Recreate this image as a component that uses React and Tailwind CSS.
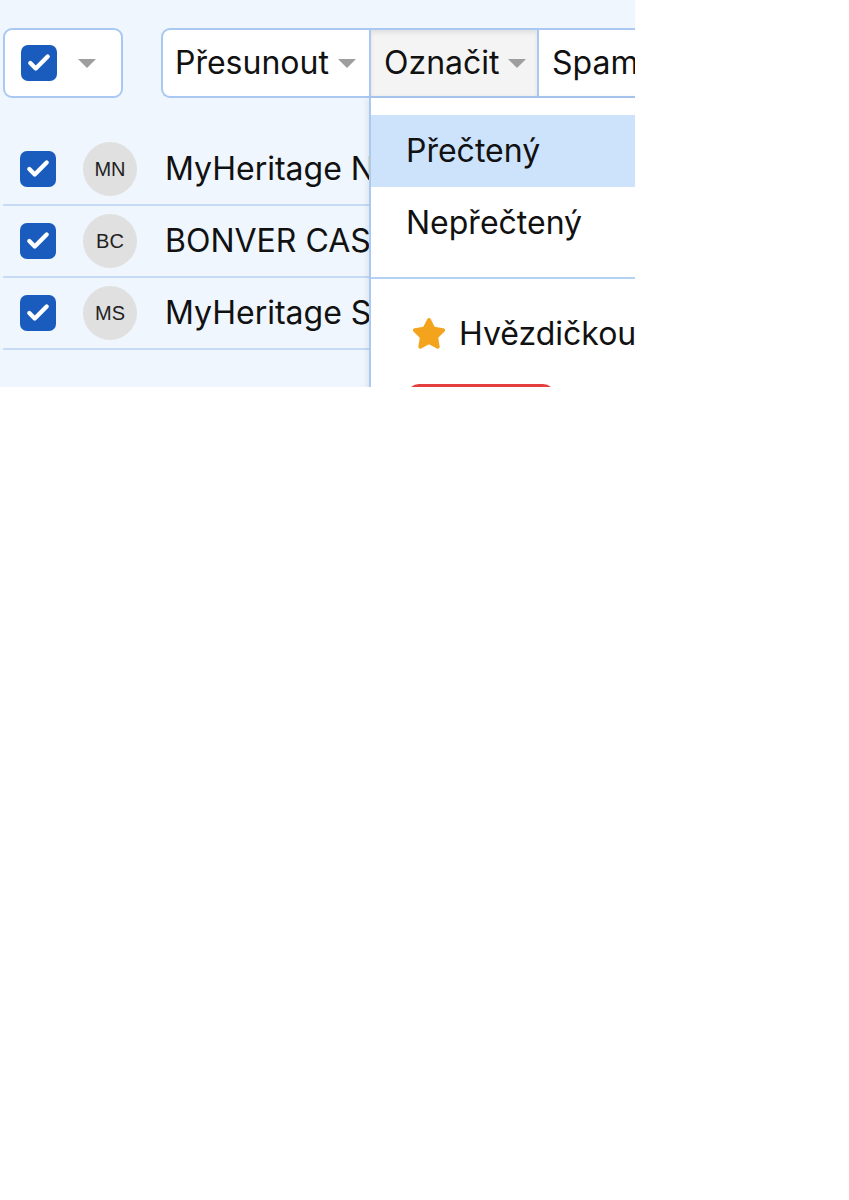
import { Check, Star } from 'lucide-react'

const rows = [
  { initials: 'MN', name: 'MyHeritage Newsletter' },
  { initials: 'BC', name: 'BONVER CASINO' },
  { initials: 'MS', name: 'MyHeritage Support' },
]

const font = { fontFamily: 'Inter, "Noto Sans", sans-serif' }

function Box() {
  return (
    <span className="w-[36px] h-[36px] rounded-[7px] bg-[#1a5cbd] flex items-center justify-center shrink-0">
      <Check size={26} strokeWidth={4} className="text-white" />
    </span>
  )
}

function Caret() {
  return <span className="w-0 h-0 shrink-0 border-l-[9px] border-r-[9px] border-t-[9px] border-l-transparent border-r-transparent border-t-[#9e9e9e]" />
}

export default function App() {
  return (
    <div className="w-[635px] h-[387px] overflow-hidden relative bg-[#eff6fe] text-[#111]" style={font}>
      <div className="flex items-center pt-[28px] pl-[3px]">
        <div className="w-[120px] h-[70px] shrink-0 rounded-[9px] border-2 border-[#a9c8f2] bg-white flex items-center pl-[16px] gap-[21px]">
          <Box />
          <Caret />
        </div>
        <div className="ml-[38px] shrink-0 flex h-[70px] border-2 border-r-0 border-[#a9c8f2] rounded-l-[9px] bg-white text-[32px]">
          <div className="w-[206px] shrink-0 flex items-center pl-[12px] gap-[9px]">
            Přesunout <Caret />
          </div>
          <div className="w-[170px] shrink-0 flex items-center pl-[13px] gap-[8px] border-l-2 border-r-2 border-[#a9c8f2] bg-[#f4f4f4] shadow-[inset_0_3px_4px_rgba(0,0,0,0.08)]">
            Označit <Caret />
          </div>
          <div className="w-[200px] shrink-0 flex items-center pl-[13px] whitespace-nowrap">Spam</div>
        </div>
      </div>

      <div className="mt-[36px] ml-[3px]">
        {rows.map((r) => (
          <div key={r.initials} className="h-[72px] flex items-center border-b-2 border-[#c6dbf5] pl-[17px]">
            <Box />
            <span
              className="ml-[27px] w-[54px] h-[54px] shrink-0 rounded-full bg-[#e0e0e0] flex items-center justify-center text-[20px] text-[#222]"
              style={{ fontFamily: '"Liberation Sans", Arial, sans-serif' }}
            >
              {r.initials}
            </span>
            <span className="ml-[28px] text-[32px] whitespace-nowrap">{r.name}</span>
          </div>
        ))}
      </div>

      <div className="absolute left-[369px] top-[98px] w-[300px] h-[320px] bg-white border-l-2 border-[#a9c8f2] shadow-[-2px_0_6px_rgba(0,0,0,0.08)] pt-[17px] text-[32px]">
        <div className="h-[72px] flex items-center pl-[35px] bg-[#cde2fb]">Přečtený</div>
        <div className="h-[72px] flex items-center pl-[35px]">Nepřečtený</div>
        <div className="mt-[18px] border-t-2 border-[#b4d0f3]" />
        <div className="h-[72px] mt-[19px] flex items-center pl-[40px] gap-[12px] whitespace-nowrap">
          <Star size={36} fill="#f4a41c" stroke="#f4a41c" strokeWidth={1.5} strokeLinejoin="round" />
          Hvězdičkou
        </div>
        <div className="ml-[36px] mt-[14px] w-[148px] h-[40px] rounded-[12px] bg-[#e53e3e]" />
      </div>
    </div>
  )
}
